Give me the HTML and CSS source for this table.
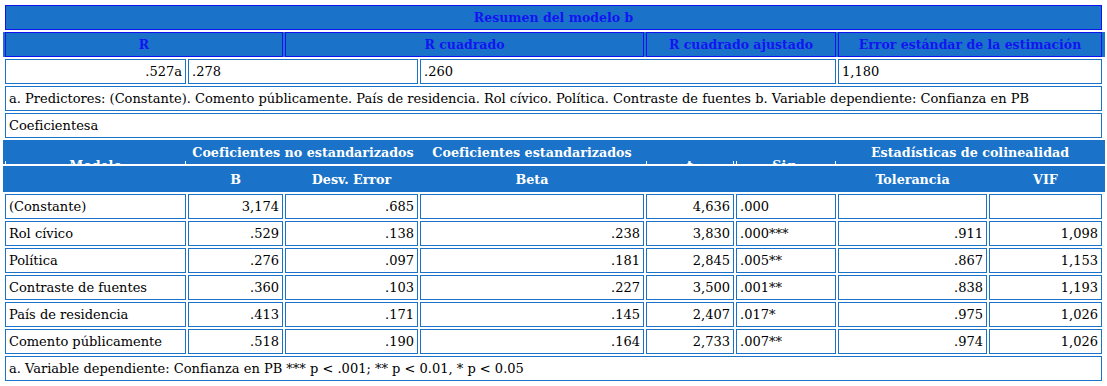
FILE: index.html
```html
<!DOCTYPE html>
<html lang="es">
<head>
<meta charset="utf-8">
<title>Resumen del modelo</title>
<link rel="stylesheet" href="styles.css">
</head>
<body>
<div class="page">
  <div class="row">
    <div class="cell head c1-8">Resumen del modelo b</div>
  </div>
  <div class="row band-row">
    <div class="cell head c1-2">R</div>
    <div class="cell head c3-4">R cuadrado</div>
    <div class="cell head c5-6">R cuadrado ajustado</div>
    <div class="cell head c7-8">Error estándar de la estimación</div>
  </div>
  <div class="row">
    <div class="cell num">.527a</div>
    <div class="cell c2-3">.278</div>
    <div class="cell c4-6">.260</div>
    <div class="cell c7-8">1,180</div>
  </div>
  <div class="row">
    <div class="cell c1-8">a. Predictores: (Constante). Comento públicamente. País de residencia. Rol cívico. Política. Contraste de fuentes b. Variable dependiente: Confianza en PB</div>
  </div>
  <div class="row">
    <div class="cell c1-8">Coeficientesa</div>
  </div>

  <div class="row band band1">
    <div class="bcell clipped">Modelo</div>
    <div class="bcell c2-3">Coeficientes no estandarizados</div>
    <div class="bcell">Coeficientes estandarizados</div>
    <div class="bcell clipped">t</div>
    <div class="bcell clipped">Sig.</div>
    <div class="bcell c7-8">Estadísticas de colinealidad</div>
  </div>
  <div class="row band band2">
    <div class="bcell"></div>
    <div class="bcell">B</div>
    <div class="bcell">Desv. Error</div>
    <div class="bcell">Beta</div>
    <div class="bcell"></div>
    <div class="bcell"></div>
    <div class="bcell">Tolerancia</div>
    <div class="bcell">VIF</div>
  </div>

  <div class="row">
    <div class="cell">(Constante)</div>
    <div class="cell num">3,174</div>
    <div class="cell num">.685</div>
    <div class="cell num"></div>
    <div class="cell num">4,636</div>
    <div class="cell">.000</div>
    <div class="cell num"></div>
    <div class="cell num"></div>
  </div>
  <div class="row">
    <div class="cell">Rol cívico</div>
    <div class="cell num">.529</div>
    <div class="cell num">.138</div>
    <div class="cell num">.238</div>
    <div class="cell num">3,830</div>
    <div class="cell">.000***</div>
    <div class="cell num">.911</div>
    <div class="cell num">1,098</div>
  </div>
  <div class="row">
    <div class="cell">Política</div>
    <div class="cell num">.276</div>
    <div class="cell num">.097</div>
    <div class="cell num">.181</div>
    <div class="cell num">2,845</div>
    <div class="cell">.005**</div>
    <div class="cell num">.867</div>
    <div class="cell num">1,153</div>
  </div>
  <div class="row">
    <div class="cell">Contraste de fuentes</div>
    <div class="cell num">.360</div>
    <div class="cell num">.103</div>
    <div class="cell num">.227</div>
    <div class="cell num">3,500</div>
    <div class="cell">.001**</div>
    <div class="cell num">.838</div>
    <div class="cell num">1,193</div>
  </div>
  <div class="row">
    <div class="cell">País de residencia</div>
    <div class="cell num">.413</div>
    <div class="cell num">.171</div>
    <div class="cell num">.145</div>
    <div class="cell num">2,407</div>
    <div class="cell">.017*</div>
    <div class="cell num">.975</div>
    <div class="cell num">1,026</div>
  </div>
  <div class="row">
    <div class="cell">Comento públicamente</div>
    <div class="cell num">.518</div>
    <div class="cell num">.190</div>
    <div class="cell num">.164</div>
    <div class="cell num">2,733</div>
    <div class="cell">.007**</div>
    <div class="cell num">.974</div>
    <div class="cell num">1,026</div>
  </div>
  <div class="row">
    <div class="cell c1-8">a. Variable dependiente: Confianza en PB *** p &lt; .001; ** p &lt; 0.01, * p &lt; 0.05</div>
  </div>
</div>
</body>
</html>
```

FILE: styles.css
```css
html, body {
  margin: 0;
  padding: 0;
  background: #ffffff;
}

.page {
  display: flex;
  flex-direction: column;
  gap: 2px;
  padding: 5px;
  width: 1097px;
  font-family: "DejaVu Serif", serif;
  font-size: 13px;
  color: #000000;
}

.row {
  display: grid;
  grid-template-columns: 181px 95px 133px 224px 88px 100px 149px 113px;
  column-gap: 2px;
  height: 25px;
}

.cell {
  box-sizing: border-box;
  border: 1px solid #1a73c8;
  padding: 0 3px;
  display: flex;
  align-items: center;
  white-space: nowrap;
  overflow: hidden;
  min-width: 0;
}

.num {
  justify-content: flex-end;
}

.c1-2 { grid-column: 1 / 3; }
.c2-3 { grid-column: 2 / 4; }
.c3-4 { grid-column: 3 / 5; }
.c4-6 { grid-column: 4 / 7; }
.c5-6 { grid-column: 5 / 7; }
.c7-8 { grid-column: 7 / 9; }
.c1-8 { grid-column: 1 / 9; }

.head {
  background: #1a73c8;
  border-color: #1212ee;
  color: #1414f2;
  font-weight: bold;
  font-size: 12.5px;
  justify-content: center;
}

.band-row {
  margin: 0 -3px 0 -2px;
  padding: 0 3px 0 2px;
  background: #1a73c8;
}

.band {
  margin: 0 -3px 0 -2px;
  padding: 0 3px 0 2px;
  background: #1a73c8;
  overflow: hidden;
}

.band1 {
  height: 24px;
}

.band2 {
  height: 26px;
}

.bcell {
  display: flex;
  align-items: center;
  justify-content: center;
  color: #ffffff;
  font-weight: bold;
  font-size: 12.7px;
  white-space: nowrap;
  min-width: 0;
}

.clipped {
  align-items: flex-start;
  padding-top: 18px;
  overflow: hidden;
  background:
    linear-gradient(#ffffff, #ffffff) left bottom / 1px 3px no-repeat,
    linear-gradient(#ffffff, #ffffff) right bottom / 1px 3px no-repeat;
}
```
